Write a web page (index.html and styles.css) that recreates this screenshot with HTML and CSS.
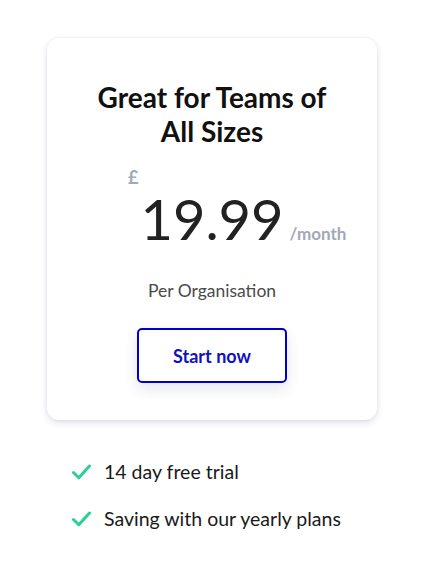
FILE: index.html
```html
<!DOCTYPE html>
<html>
<head>
    <title>Pricing</title>
    <link rel="stylesheet" href="styles.css">
</head>
<body>
    <div class="container">
        <div class="plan-card">
            <h1 class="plan-title">Great for Teams of All Sizes</h1>
            <div class="price">
                <span class="currency">£</span>
                <span class="amount">19.99</span>
                <span class="period">/month</span>
            </div>
            <p class="per">Per Organisation</p>
            <button class="start-button">Start now</button>
        </div>
        <ul class="perks">
            <li class="perk">
                <svg class="tick" width="19" height="16" viewBox="0 0 19 16"><path d="M1.5 8.5 L6.8 13.8 L17.5 2" fill="none" stroke="#2bcf9a" stroke-width="3" stroke-linecap="round" stroke-linejoin="round"/></svg>
                14 day free trial
            </li>
            <li class="perk">
                <svg class="tick" width="19" height="16" viewBox="0 0 19 16"><path d="M1.5 8.5 L6.8 13.8 L17.5 2" fill="none" stroke="#2bcf9a" stroke-width="3" stroke-linecap="round" stroke-linejoin="round"/></svg>
                Saving with our yearly plans
            </li>
        </ul>
    </div>
</body>
</html>
```

FILE: styles.css
```css
* {
    margin: 0;
    padding: 0;
    box-sizing: border-box;
}

body {
    background: #ffffff;
    font-family: 'Lato', 'Liberation Sans', sans-serif;
    color: #1a1a1a;
}

.container {
    padding: 38px 48px 0 47px;
}

.plan-card {
    display: flex;
    flex-direction: column;
    align-items: center;
    width: 330px;
    height: 382px;
    padding: 42px 50px 0;
    background: white;
    border-radius: 12px;
    box-shadow: 0 3px 6px rgba(40, 50, 110, 0.14),
                0 0 3px rgba(40, 50, 110, 0.08);
}

.plan-title {
    font-size: 28px;
    font-weight: 700;
    line-height: 34px;
    text-align: center;
    color: #111;
}

.price {
    display: grid;
    grid-template-columns: minmax(0, 1fr) auto minmax(0, 1fr);
    width: 100%;
    margin-top: 19px;
}

.currency {
    justify-self: end;
    align-self: start;
    margin-right: 2px;
    font-size: 18px;
    font-weight: 700;
    line-height: 20px;
    color: #a3a8b9;
}

.amount {
    align-self: baseline;
    font-size: 56px;
    font-weight: 400;
    line-height: 56px;
    margin-top: 24px;
    color: #222;
}

.period {
    justify-self: start;
    align-self: baseline;
    margin-left: 6px;
    font-size: 17px;
    font-weight: 700;
    white-space: nowrap;
    color: #a3a8b9;
}

.per {
    margin-top: 33px;
    font-size: 17.5px;
    font-weight: 400;
    color: #4a4a4a;
}

.start-button {
    width: 150px;
    height: 55px;
    margin-top: 27px;
    background: white;
    border: 2px solid #0000cd;
    border-radius: 5px;
    font-family: 'Lato', sans-serif;
    font-size: 18px;
    font-weight: 700;
    color: #1111c0;
    box-shadow: 0 6px 14px rgba(40, 50, 110, 0.12);
    cursor: pointer;
}

.perks {
    list-style: none;
    margin-top: 28px;
    padding-left: 25px;
}

.perk {
    display: flex;
    align-items: center;
    gap: 13px;
    height: 47px;
    font-size: 19.5px;
    font-weight: 400;
    color: #1a1a1a;
}
```
